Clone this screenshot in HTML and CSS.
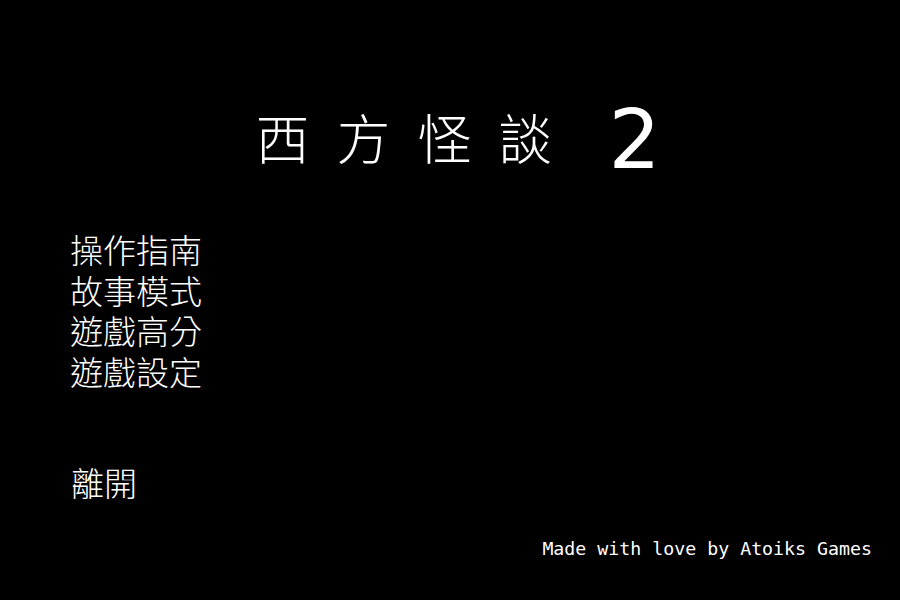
FILE: index.html
```html
<!DOCTYPE html>
<html lang="zh-Hant">
<head>
<meta charset="utf-8">
<title>西方怪談 2</title>
<link rel="stylesheet" href="styles.css">
</head>
<body>
<div class="screen">
  <h1 class="title"><span class="title-cjk">西方怪談</span><span class="title-num">2</span></h1>
  <ul class="menu">
    <li>操作指南</li>
    <li>故事模式</li>
    <li>遊戲高分</li>
    <li>遊戲設定</li>
  </ul>
  <div class="exit">離開</div>
  <div class="credit">Made with love by Atoiks Games</div>
</div>
</body>
</html>
```
FILE: styles.css
```css
html, body {
  margin: 0;
  padding: 0;
  background: #000;
}
.screen {
  width: 900px;
  height: 600px;
  background: #000;
  color: #fff;
  display: flex;
  flex-direction: column;
  font-family: "Noto Sans CJK TC", "Noto Sans", sans-serif;
  font-weight: 300;
}
.title {
  margin: 92px 0 0 0;
  padding-left: 16px;
  text-align: center;
  font-weight: 300;
  line-height: 90px;
  height: 90px;
  white-space: nowrap;
}
.title-cjk {
  font-size: 54px;
  letter-spacing: 27px;
  vertical-align: 8px;
}
.title-num {
  font-family: "DejaVu Sans", sans-serif;
  font-size: 82px;
  font-weight: normal;
  margin-left: 29px;
}
.menu {
  list-style: none;
  margin: 47px 0 0 70px;
  padding: 0;
  font-size: 33px;
  line-height: 40.67px;
}
.exit {
  margin: 70px 0 0 71px;
  font-size: 33px;
  line-height: 40px;
}
.credit {
  margin: 35px 28px 0 0;
  align-self: flex-end;
  font-family: "DejaVu Sans Mono", monospace;
  font-size: 18.25px;
  font-weight: normal;
  line-height: 24px;
}
```
